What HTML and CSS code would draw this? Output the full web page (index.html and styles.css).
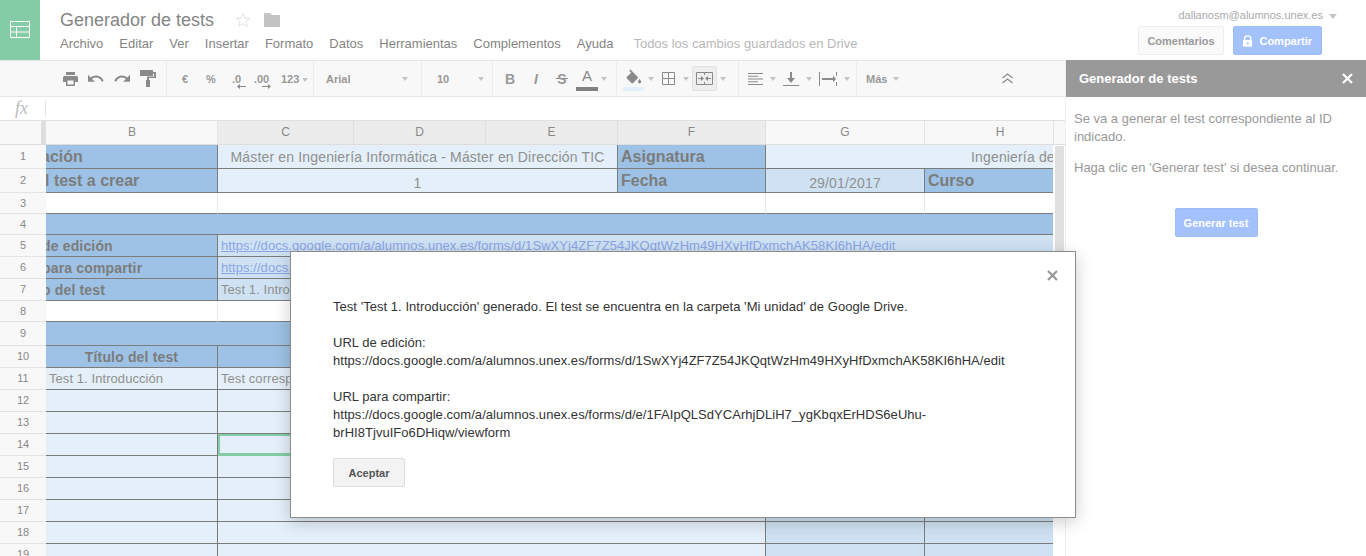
FILE: index.html
```html
<!DOCTYPE html>
<html lang="es">
<head>
    <meta charset="UTF-8">
    <title>Generador de tests</title>
    <link rel="stylesheet" href="styles.css">
</head>
<body>
    <header class="top">
        <div class="app-icon">
            <svg width="20" height="17" viewBox="0 0 20 17" fill="none" stroke="#fff" stroke-width="1"><path d="M.5.5h19v16H.5zM.5 5.500h19M.5 11h19M6.500 5.500v11"/></svg>
        </div>
        <div class="doc-info">
            <div class="doc-title">
                <span>Generador de tests</span>
                <svg class="star" width="16" height="16" viewBox="0 0 16 16" fill="none" stroke="#e2e2e2"><path d="M8 1.500l1.900 4.500 4.800.4-3.650 3.150 1.100 4.700L8 11.700l-4.150 2.550 1.100-4.700L1.300 6.400l4.800-.4z"/></svg>
                <svg class="folder" width="16" height="14" viewBox="0 0 16 14" fill="#c4c4c4"><path d="M0 0h6l2 2h8v12H0z"/></svg>
            </div>
            <nav class="menu">
                <span>Archivo</span>
                <span>Editar</span>
                <span>Ver</span>
                <span>Insertar</span>
                <span>Formato</span>
                <span>Datos</span>
                <span>Herramientas</span>
                <span>Complementos</span>
                <span>Ayuda</span>
                <span class="saved">Todos los cambios guardados en Drive</span>
            </nav>
        </div>
        <div class="account">
            <div class="email">dallanosm@alumnos.unex.es <i class="caret"></i></div>
            <div class="account-btns">
                <button class="btn btn-comments">Comentarios</button>
                <button class="btn btn-blue btn-share">
                    <svg width="10" height="12" viewBox="0 0 10 12"><path fill="#fff" d="M1 5V3.500a4 3.500 0 0 1 8 0V5h1v7H0V5zm1.500 0h5V3.500a2.500 2.200 0 0 0-5 0zM5 7.200a1.200 1.200 0 1 0 .01 0z"/></svg>
                    Compartir
                </button>
            </div>
        </div>
    </header>

    <div class="main">
        <div class="work">
            <div class="toolbar">
                <div class="tb-group g-file">
                    <span class="tb-btn"><svg width="15" height="14" viewBox="0 0 15 14" fill="#8a8a8a"><path d="M3 0h9v3H3zM1.500 4h12A1.500 1.500 0 0 1 15 5.500V10h-3v4H3v-4H0V5.500A1.500 1.500 0 0 1 1.500 4zM4.500 8.500v4h6v-4z"/></svg></span>
                    <span class="tb-btn"><svg width="16" height="12" viewBox="2 7 21 11" fill="#8a8a8a"><path d="M12.500 8c-2.650 0-5.050.99-6.900 2.600L2 7v9h9l-3.620-3.620c1.390-1.160 3.160-1.880 5.120-1.880 3.540 0 6.550 2.310 7.600 5.500l2.370-.78C21.080 11.030 17.150 8 12.500 8z"/></svg></span>
                    <span class="tb-btn"><svg class="flip" width="16" height="12" viewBox="2 7 21 11" fill="#8a8a8a"><path d="M12.500 8c-2.650 0-5.050.99-6.900 2.600L2 7v9h9l-3.620-3.620c1.390-1.160 3.160-1.880 5.120-1.880 3.540 0 6.550 2.310 7.600 5.500l2.370-.78C21.080 11.030 17.150 8 12.500 8z"/></svg></span>
                    <span class="tb-btn"><svg width="16" height="17" viewBox="0 0 16 17" fill="#8a8a8a"><path d="M0 0h13v2h3v6H9v2h1v7H6v-7h1V6.500h7V3.500h-1V6H0z"/></svg></span>
                </div>
                <div class="tb-group g-num">
                    <span class="tb-btn tb-txt">€</span>
                    <span class="tb-btn tb-txt">%</span>
                    <span class="tb-btn tb-txt tb-dec">.0<svg width="9" height="5" viewBox="0 0 9 5" fill="#8a8a8a"><path d="M9 2v1H3v2L0 2.500 3 0v2z"/></svg></span>
                    <span class="tb-btn tb-txt tb-dec">.00<svg width="9" height="5" viewBox="0 0 9 5" fill="#8a8a8a"><path d="M0 2v1h6v2l3-2.500L6 0v2z"/></svg></span>
                    <span class="tb-more tb-txt">123 <i class="caret"></i></span>
                </div>
                <div class="tb-group g-font tb-txt"><span>Arial</span><i class="caret"></i></div>
                <div class="tb-group g-size tb-txt"><span>10</span><i class="caret"></i></div>
                <div class="tb-group g-style">
                    <span class="tb-btn tb-b">B</span>
                    <span class="tb-btn tb-i">I</span>
                    <span class="tb-btn tb-s">S</span>
                    <span class="tb-btn tb-a">A</span>
                    <i class="caret"></i>
                </div>
                <div class="tb-group g-cell">
                    <span class="tb-fill"><svg width="17" height="15" viewBox="1 0 21 17" fill="#8a8a8a"><path d="M16.560 8.940L7.620 0 6.210 1.410l2.380 2.380-5.150 5.150c-.59.59-.59 1.540 0 2.120l5.500 5.500c.29.29.68.44 1.060.44s.77-.15 1.060-.44l5.500-5.500c.59-.58.59-1.530 0-2.120zM19 11.500s-2 2.170-2 3.500c0 1.100.9 2 2 2s2-.9 2-2c0-1.330-2-3.500-2-3.500z"/></svg></span>
                    <i class="caret"></i>
                    <svg class="ic-border" width="13" height="13" viewBox="0 0 13 13" fill="none" stroke="#8a8a8a"><path d="M.5.500h12v12H.5zM6.500.5v12M.5 6.500h12"/></svg>
                    <i class="caret"></i>
                    <span class="tb-merge"><svg width="17" height="13" viewBox="0 0 17 13" fill="none" stroke="#8a8a8a"><path d="M.5.500h16v12H.5z"/><path d="M8.500 1v2M8.500 10v2"/><path fill="#8a8a8a" stroke="none" d="M2 6h3V4l3 2.500L5 9V7H2zM15 6h-3V4L9 6.500 12 9V7h3z"/></svg></span>
                    <i class="caret"></i>
                </div>
                <div class="tb-group g-align">
                    <svg width="15" height="12" viewBox="0 0 15 12" fill="#8a8a8a"><path d="M0 0h15v1H0zM0 2.750h10v1H0zM0 5.500h15v1H0zM0 8.250h10v1H0zM0 11h15v1H0z"/></svg>
                    <i class="caret"></i>
                    <svg class="ic-valign" width="16" height="14" viewBox="0 0 16 14" fill="#8a8a8a"><path d="M0 13h16v1H0zM7 0h2v6h3l-4 5-4-5h3z"/></svg>
                    <i class="caret"></i>
                    <svg class="ic-wrap" width="18" height="14" viewBox="0 0 18 14" fill="#8a8a8a"><path d="M0 0h1v14H0zM17 0h1v4h-1zM17 10h1v4h-1zM3 6h11V3.500L17 7l-3 3.500V8H3z"/></svg>
                    <i class="caret"></i>
                </div>
                <div class="tb-group g-more tb-txt"><span>Más</span><i class="caret"></i></div>
                <span class="tb-collapse"><svg width="11" height="11" viewBox="0 0 11 11" fill="none" stroke="#8a8a8a" stroke-width="1.300"><path d="M.5 5L5.500 1l5 4M.5 10l5-4 5 4"/></svg></span>
            </div>

            <div class="formula-bar"><span class="fx">fx</span></div>

            <div class="col-heads">
                <div class="corner"></div>
                <div class="col-b">B</div>
                <div class="on">C</div>
                <div class="on">D</div>
                <div class="on">E</div>
                <div class="on">F</div>
                <div>G</div>
                <div class="col-h">H</div>
            </div>

            <div class="sheet">
                <div class="row-heads">
                    <div class="tall">1</div>
                    <div class="tall">2</div>
                    <div class="short">3</div>
                    <div class="short">4</div>
                    <div>5</div>
                    <div>6</div>
                    <div>7</div>
                    <div class="short">8</div>
                    <div class="tall">9</div>
                    <div>10</div>
                    <div>11</div>
                    <div>12</div>
                    <div>13</div>
                    <div>14</div>
                    <div>15</div>
                    <div>16</div>
                    <div>17</div>
                    <div>18</div>
                    <div>19</div>
                </div>
                <div class="cells">
                    <table class="grid">
                        <colgroup>
                            <col class="w-b"><col class="w-c"><col class="w-d"><col class="w-e"><col class="w-f"><col class="w-g"><col class="w-h">
                        </colgroup>
                        <tr class="tall">
                            <td class="head big cut">ación</td>
                            <td colspan="3" class="pale center">Máster en Ingeniería Informática - Máster en Dirección TIC</td>
                            <td class="head big">Asignatura</td>
                            <td colspan="2" class="pale subject">Ingeniería de</td>
                        </tr>
                        <tr class="tall">
                            <td class="head big cut-l">l test a crear</td>
                            <td colspan="3" class="pale center low">1</td>
                            <td class="head big">Fecha</td>
                            <td class="mid center low">29/01/2017</td>
                            <td class="head big">Curso</td>
                        </tr>
                        <tr class="short">
                            <td class="blank"></td>
                            <td colspan="4" class="blank"></td>
                            <td class="blank"></td>
                            <td class="blank"></td>
                        </tr>
                        <tr class="short"><td colspan="7" class="head"></td></tr>
                        <tr>
                            <td class="head cut-s">de edición</td>
                            <td colspan="6" class="mid small"><a href="#">https://docs.google.com/a/alumnos.unex.es/forms/d/1SwXYj4ZF7Z54JKQqtWzHm49HXyHfDxmchAK58KI6hHA/edit</a></td>
                        </tr>
                        <tr>
                            <td class="head cut-s">para compartir</td>
                            <td colspan="6" class="mid small"><a href="#">https://docs.google.com/a/alumnos.unex.es/forms/d/e/1FAIpQLSdYCArhjDLiH7_ygKbqxErHDS6eUhu</a></td>
                        </tr>
                        <tr>
                            <td class="head cut-s">o del test</td>
                            <td colspan="6" class="mid small">Test 1. Introducción</td>
                        </tr>
                        <tr class="short">
                            <td class="blank"></td>
                            <td colspan="6" class="blank"></td>
                        </tr>
                        <tr class="tall"><td colspan="7" class="head"></td></tr>
                        <tr>
                            <td class="head center">Título del test</td>
                            <td colspan="4" class="head"></td>
                            <td class="head"></td>
                            <td class="head"></td>
                        </tr>
                        <tr>
                            <td class="pale small">Test 1. Introducción</td>
                            <td colspan="4" class="pale small">Test correspondiente</td>
                            <td class="mid"></td>
                            <td class="mid"></td>
                        </tr>
                        <tr><td class="pale"></td><td colspan="4" class="pale"></td><td class="mid"></td><td class="mid"></td></tr>
                        <tr><td class="pale"></td><td colspan="4" class="pale"></td><td class="mid"></td><td class="mid"></td></tr>
                        <tr><td class="pale"></td><td colspan="4" class="pale sel"></td><td class="mid"></td><td class="mid"></td></tr>
                        <tr><td class="pale"></td><td colspan="4" class="pale"></td><td class="mid"></td><td class="mid"></td></tr>
                        <tr><td class="pale"></td><td colspan="4" class="pale"></td><td class="mid"></td><td class="mid"></td></tr>
                        <tr><td class="pale"></td><td colspan="4" class="pale"></td><td class="mid"></td><td class="mid"></td></tr>
                        <tr><td class="pale"></td><td colspan="4" class="pale"></td><td class="mid"></td><td class="mid"></td></tr>
                        <tr><td class="pale"></td><td colspan="4" class="pale"></td><td class="mid"></td><td class="mid"></td></tr>
                    </table>
                </div>
                <div class="scroll"><div class="thumb"></div></div>
            </div>
        </div>

        <aside class="panel">
            <div class="panel-head">
                <span>Generador de tests</span>
                <svg width="11" height="11" viewBox="0 0 11 11" stroke="#fff" stroke-width="2.200"><path d="M1 1l9 9M10 1l-9 9"/></svg>
            </div>
            <div class="panel-body">
                <p>Se va a generar el test correspondiente al ID indicado.</p>
                <p>Haga clic en 'Generar test' si desea continuar.</p>
                <div class="panel-action"><button class="btn btn-blue btn-gen">Generar test</button></div>
            </div>
        </aside>
    </div>

    <div class="dialog">
        <svg class="dialog-close" width="11" height="11" viewBox="0 0 11 11" stroke="#999" stroke-width="2.200"><path d="M1 1l9 9M10 1l-9 9"/></svg>
        <p>Test 'Test 1. Introducción' generado. El test se encuentra en la carpeta 'Mi unidad' de Google Drive.</p>
        <p>URL de edición:<br>https://docs.google.com/a/alumnos.unex.es/forms/d/1SwXYj4ZF7Z54JKQqtWzHm49HXyHfDxmchAK58KI6hHA/edit</p>
        <p>URL para compartir:<br>https://docs.google.com/a/alumnos.unex.es/forms/d/e/1FAIpQLSdYCArhjDLiH7_ygKbqxErHDS6eUhu-brHI8TjvuIFo6DHiqw/viewform</p>
        <button class="btn-ok">Aceptar</button>
    </div>
</body>
</html>
```

FILE: styles.css
```css
* {
    box-sizing: border-box;
}

html,
body {
    height: 100%;
}

body {
    margin: 0;
    overflow: hidden;
    font-family: "Liberation Sans", Arial, sans-serif;
    font-size: 13px;
    color: #888;
    background-color: #fff;
}

/* header */
.top {
    display: flex;
    height: 60px;
}

.app-icon {
    display: flex;
    align-items: center;
    justify-content: center;
    width: 40px;
    height: 60px;
    padding-bottom: 2px;
    background-color: #83cca5;
}

.doc-info {
    padding: 9px 0 0 20px;
}

.doc-title {
    display: flex;
    align-items: center;
    height: 22px;
    font-size: 18px;
    color: #858585;
}

.star {
    margin-left: 21px;
}

.folder {
    margin-left: 13px;
}

.menu {
    display: flex;
    gap: 16px;
    margin-top: 5px;
    line-height: 16px;
    color: #848484;
}

.menu .saved {
    margin-left: 4px;
    color: #b8b8b8;
}

.account {
    margin-left: auto;
    padding: 8px 29px 0 0;
}

.email {
    height: 18px;
    padding-left: 41px;
    font-size: 11px;
    line-height: 14px;
    color: #aaa;
    white-space: nowrap;
}

.email .caret {
    margin-left: 3px;
    border-left-width: 4.500px;
    border-right-width: 4.500px;
    border-top-width: 5px;
}

.account-btns {
    display: flex;
    justify-content: flex-end;
    gap: 9px;
    margin-right: 15px;
}

.caret {
    display: inline-block;
    width: 0;
    height: 0;
    border-left: 3.500px solid transparent;
    border-right: 3.500px solid transparent;
    border-top: 4px solid #c4c4c4;
    vertical-align: middle;
}

.btn {
    height: 29px;
    padding: 0 9px;
    font-family: inherit;
    font-size: 11px;
    font-weight: bold;
    color: #999;
    background-color: #fafafa;
    border: 1px solid #eee;
    border-radius: 2px;
}

.btn-comments {
    width: 86px;
    padding: 0;
}

.btn-blue {
    color: #fff;
    background-color: #a3c2fb;
    border-color: #9dbdf8;
}

.btn-share {
    display: flex;
    align-items: center;
    gap: 7px;
    width: 89px;
    padding-left: 9px;
}

/* toolbar */
.main {
    display: flex;
    height: 496px;
}

.work {
    width: 1066px;
    border-right: 1px solid #eee;
}

.toolbar {
    display: flex;
    align-items: center;
    height: 37px;
    background-color: #f8f8f8;
    border-top: 1px solid #e5e5e5;
    border-bottom: 1px solid #e5e5e5;
}

.tb-group {
    display: flex;
    align-items: center;
    height: 35px;
    border-right: 1px solid #ececec;
}

.tb-btn {
    display: flex;
    align-items: center;
    justify-content: center;
    width: 26px;
    height: 26px;
}

.tb-txt {
    font-size: 11px;
    font-weight: bold;
    color: #999;
}

.g-file {
    width: 167px;
    padding-left: 57px;
}

.g-num {
    width: 147px;
    padding-left: 5px;
}

.tb-dec {
    flex-direction: column;
    width: 25px;
    line-height: 11px;
}

.tb-dec svg {
    margin: -1px 0 -5px 10px;
}

.tb-more {
    margin-left: 7px;
    white-space: nowrap;
}

.g-font {
    justify-content: space-between;
    width: 108px;
    padding: 0 13px 0 12px;
}

.g-size {
    justify-content: space-between;
    width: 71px;
    padding: 0 8px 0 15px;
}

.g-style {
    width: 124px;
    padding-left: 4px;
}

.tb-b,
.tb-i,
.tb-s {
    font-size: 14px;
    font-weight: bold;
    color: #999;
}

.tb-i {
    font-style: italic;
}

.tb-s {
    background: linear-gradient(#8a8a8a, #8a8a8a) center / 12px 1px no-repeat;
}

.tb-a {
    width: 22px;
    height: 25px;
    margin: 0 3px 0 1px;
    padding-bottom: 3px;
    font-size: 15px;
    color: #8a8a8a;
    border-bottom: 4px solid #808080;
}

.g-cell {
    width: 122px;
    padding-left: 6px;
}

.tb-fill {
    display: flex;
    align-items: center;
    justify-content: center;
    width: 21px;
    height: 24px;
    border-bottom: 4px solid #e4eff9;
}

.g-cell .caret:nth-child(2) {
    margin-left: 4px;
}

.ic-border {
    margin: 0 8px 0 8px;
}

.tb-merge {
    display: flex;
    align-items: center;
    justify-content: center;
    width: 25px;
    height: 25px;
    margin-left: 3px;
    background-color: #eee;
    border: 1px solid #e2e2e2;
    border-radius: 2px;
}

.g-cell .caret:last-child {
    margin-left: 3px;
}

.g-align {
    width: 118px;
    padding-left: 9px;
}

.g-align .caret {
    margin-left: 7px;
}

.ic-valign {
    margin-left: 7px;
}

.ic-wrap {
    margin-left: 7px;
}

.g-more {
    gap: 6px;
    padding-left: 9px;
    border-right: 0;
}

.tb-collapse {
    display: flex;
    margin-left: auto;
    margin-right: 52px;
}

.flip {
    transform: scaleX(-1);
}

/* formula bar */
.formula-bar {
    height: 24px;
    padding: 3px 0 0 15px;
    background-color: #fff;
    border-bottom: 1px solid #e0e0e0;
}

.fx {
    display: block;
    width: 31px;
    height: 17px;
    font-family: "Liberation Serif", serif;
    font-size: 18px;
    font-style: italic;
    line-height: 16px;
    color: #bbb;
    border-right: 1px solid #e5e5e5;
}

/* column and row headers */
.col-heads {
    display: grid;
    grid-template-columns: 46px 172px 136px 132px 132px 148px 159px 129px;
    height: 24px;
    font-size: 12px;
    line-height: 23px;
    text-align: center;
    background-color: #f8f8f8;
    border-bottom: 1px solid #ddd;
}

.col-heads div {
    border-right: 1px solid #e4e4e4;
}

.col-heads .on {
    background-color: #ececec;
    border-right-color: #e0e0e0;
}

.col-heads .corner {
    border-right: 5px solid #dedede;
}

.col-heads .col-b {
    padding-left: 1px;
}

.col-heads .col-h {
    padding-left: 22px;
}

.sheet {
    display: flex;
    height: 411px;
    overflow: hidden;
}

.row-heads {
    flex: none;
    width: 46px;
    font-size: 11px;
    text-align: center;
    background-color: #f8f8f8;
}

.row-heads div {
    height: 22px;
    line-height: 21px;
    border-bottom: 1px solid #e4e4e4;
}

.row-heads .tall {
    height: 24px;
    line-height: 23px;
}

.row-heads .short {
    height: 21px;
    line-height: 20px;
}

.cells {
    flex: none;
    width: 1007px;
    overflow: hidden;
}

.scroll {
    flex: none;
    width: 12px;
    padding: 1px 1px 0 2px;
}

.thumb {
    height: 300px;
    background-color: #e0e0e0;
}

/* sheet cells */
.grid {
    width: 1008px;
    border-spacing: 0;
    table-layout: fixed;
    font-size: 14px;
    letter-spacing: 0.16px;
    color: #909090;
}

.w-b { width: 172px; }
.w-c { width: 136px; }
.w-d { width: 132px; }
.w-e { width: 132px; }
.w-f { width: 148px; }
.w-g { width: 159px; }
.w-h { width: 129px; }

.grid tr {
    height: 22px;
}

.grid tr.tall {
    height: 24px;
}

.grid tr.short {
    height: 21px;
}

.grid td {
    padding: 0 3px;
    overflow: hidden;
    line-height: 16px;
    white-space: nowrap;
    border-right: 1px solid #7c7c7c;
    border-bottom: 1px solid #7c7c7c;
}

.grid .head {
    font-weight: bold;
    color: #7c7c7c;
    background-color: #9dc2e5;
}

.grid .big {
    font-size: 16px;
    letter-spacing: 0;
}

.grid .cut {
    padding-left: 0;
    text-indent: -5px;
}

.grid .cut-s {
    padding-left: 0;
    text-indent: -4px;
}

.grid .cut-l {
    padding-left: 0;
    text-indent: -1px;
}

.grid .small {
    font-size: 13px;
    letter-spacing: 0.07px;
}

.grid .pale {
    background-color: #e4eff9;
}

.grid .mid {
    background-color: #cfe2f3;
}

.grid .blank {
    background-color: #fff;
    border-right-color: #e8e8e8;
}

.grid .center {
    text-align: center;
}

.grid .low {
    padding-top: 4px;
}

.grid .subject {
    padding-left: 205px;
}

.grid .sel {
    border-bottom-color: #83cca5;
    box-shadow: inset 0 0 0 2px #83cca5;
}

.grid a {
    color: #8ba5e8;
}

/* side panel */
.panel {
    width: 300px;
    background-color: #fff;
}

.panel-head {
    display: flex;
    align-items: center;
    justify-content: space-between;
    height: 37px;
    padding: 0 13px;
    font-weight: bold;
    color: #fff;
    background-color: #999;
}

.panel-body {
    padding: 13px 8px;
    line-height: 18px;
    color: #999;
}

.panel-body p {
    margin: 0 0 13px;
}

.panel-action {
    margin-top: 31px;
    text-align: center;
}

.btn-gen {
    width: 83px;
    padding: 0;
}

/* dialog */
.dialog {
    position: absolute;
    left: 290px;
    top: 251px;
    width: 786px;
    height: 267px;
    padding: 46px 42px 0;
    line-height: 18px;
    letter-spacing: 0.04px;
    color: #333;
    background-color: #fff;
    border: 1px solid #8c8c8c;
    box-shadow: 0 4px 16px rgba(0, 0, 0, 0.2);
}

.dialog p {
    margin: 0 0 18px;
}

.dialog-close {
    position: absolute;
    top: 18px;
    right: 17px;
}

.btn-ok {
    display: block;
    width: 72px;
    height: 29px;
    margin-top: -2px;
    font-family: inherit;
    font-size: 11px;
    font-weight: bold;
    color: #555;
    background-color: #f3f3f3;
    border: 1px solid #ddd;
    border-radius: 2px;
}
```
